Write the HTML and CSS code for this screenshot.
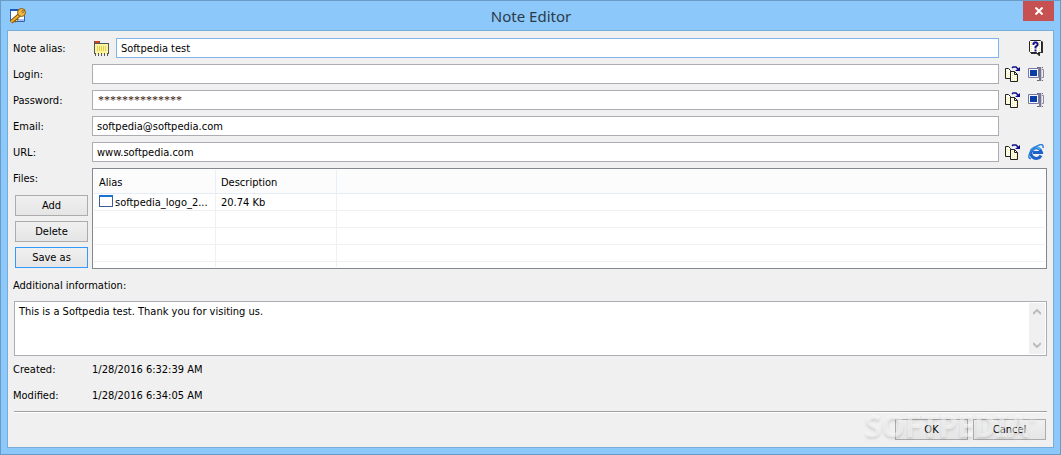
FILE: index.html
```
<!DOCTYPE html>
<html lang="en">
<head>
    <meta charset="utf-8">
    <title>Note Editor</title>
    <link rel="stylesheet" href="styles.css">
</head>
<body>
<svg class="sprites" width="0" height="0">
    <symbol id="icon-copy" viewBox="0 0 16 16">
        <path d="M1.500 2.500h3l2 2v8h-5z" fill="#fffff4" stroke="#222"/>
        <path d="M3 5v7M5 6v6" stroke="#f3e98a" stroke-dasharray="1 1"/>
        <path d="M6.500 5.500h4l3 3v7h-7z" fill="#fffff4" stroke="#222"/>
        <path d="M10.500 5.500v3h3" fill="none" stroke="#222"/>
        <path d="M8.500 7v8M10.500 10v5M12.500 10v5" stroke="#f3e98a" stroke-dasharray="1 1"/>
        <path d="M8 2l1-1h3l2 2" fill="none" stroke="#10108c" stroke-width="1.500"/>
        <path d="M16 1v4h-5z" fill="#10108c"/>
    </symbol>
    <symbol id="icon-type" viewBox="0 0 16 16">
        <path d="M.5 2.500h10v9H.5z" fill="#f8f8fc" stroke="#7777a8"/>
        <path d="M2 4h7v6H2z" fill="#0c3ea8"/>
        <path d="M9 1.500h3M13 1.500h2M9 14.500h3M13 14.500h2" stroke="#66667e"/>
        <path d="M12 1v14" stroke="#77778c" stroke-width="2"/>
        <path d="M13.500 1v14" stroke="#c9c9da"/>
        <path d="M14 3.500h1.500v8H14" fill="none" stroke="#8888a8"/>
    </symbol>
</svg>

<div class="window">
    <header class="titlebar">
        <svg class="app_icon" viewBox="0 0 18 16">
            <path d="M1.500 2.500h14v11h-14z" fill="#fff" stroke="#2f62b5"/>
            <path d="M1 1h15v2H1z" fill="#1b57ba"/>
            <path d="M8 11h7v2H8z" fill="#a9c0e6"/>
            <path d="M11 6.500L2 14" stroke="#7b5310" stroke-width="4"/>
            <path d="M5 12l2 2M7 10l2 2" stroke="#8c5d12" stroke-width="2"/>
            <path d="M11 6.500L2 14" stroke="#efb02f" stroke-width="2"/>
            <circle cx="12.500" cy="4.500" r="4" fill="#efb840" stroke="#8c5d12"/>
            <circle cx="14" cy="3.500" r="1" fill="#fff" stroke="#8c5d12"/>
        </svg>
        <h1>Note Editor</h1>
        <button class="close" aria-label="Close">
            <svg width="8" height="8" viewBox="0 0 8 8"><path d="M.5 .5l7 7M7.500 .5l-7 7" stroke="#fff" stroke-width="2"/></svg>
        </button>
    </header>

    <form class="client">
        <div class="row">
            <label for="alias">Note alias:</label>
            <svg class="note_icon" viewBox="0 0 16 16" shape-rendering="crispEdges">
                <path d="M1 1h6v2h9v11H1z" fill="#555"/>
                <path d="M2 1h4v2H2z" fill="#e63b12"/>
                <path d="M2 4h13v9H2z" fill="#fbf4a0"/>
                <path d="M4 6h1v5H4zM6 6h1v5H6zM8 6h1v5H8zM10 6h1v5h-1zM12 6h1v5h-1z" fill="#e2cf4e"/>
                <path d="M3 13h2v1H3zM6 13h2v1H6zM9 13h2v1H9zM12 13h2v1h-2z" fill="#fbf4a0"/>
                <path d="M2 14h1v2H2zM5 14h1v2H5zM8 14h1v2H8zM11 14h1v2h-1zM14 14h1v2h-1z" fill="#555"/>
            </svg>
            <input id="alias" class="focused" type="text" value="Softpedia test">
            <div class="tools">
                <button type="button" aria-label="Help">
                    <svg viewBox="0 0 16 16">
                        <path d="M3 1h11l1 1v11h-3v3h-1L9 14H3z" fill="#333"/>
                        <path d="M2.500 .5h10l1 1v10l-1 1h-2v2l-2-2h-6l-1-1v-10z" fill="#fff" stroke="#222"/>
                        <path d="M3.500 2v10M11.500 2v10" stroke="#f0e76a" stroke-dasharray="1 1"/>
                        <path d="M5.500 5V3.500l1-1h2l1 1V5L7.500 7v1.500M6.500 10.500h2" fill="none" stroke="#13138b" stroke-width="2"/>
                    </svg>
                </button>
            </div>
        </div>
        <div class="row">
            <label for="login">Login:</label>
            <input id="login" type="text">
            <div class="tools">
                <button type="button" aria-label="Copy login"><svg><use href="#icon-copy"/></svg></button>
                <button type="button" aria-label="Type login"><svg><use href="#icon-type"/></svg></button>
            </div>
        </div>
        <div class="row">
            <label for="password">Password:</label>
            <input id="password" class="masked" type="text" value="**************">
            <div class="tools">
                <button type="button" aria-label="Copy password"><svg><use href="#icon-copy"/></svg></button>
                <button type="button" aria-label="Type password"><svg><use href="#icon-type"/></svg></button>
            </div>
        </div>
        <div class="row">
            <label for="email">Email:</label>
            <input id="email" type="text" value="softpedia@softpedia.com">
            <div class="tools"></div>
        </div>
        <div class="row">
            <label for="url">URL:</label>
            <input id="url" type="text" value="www.softpedia.com">
            <div class="tools">
                <button type="button" aria-label="Copy URL"><svg><use href="#icon-copy"/></svg></button>
                <button type="button" aria-label="Open in browser">
                    <svg viewBox="0 0 16 16">
                        <path d="M13 11.500A5.300 5.300 0 1 1 13.500 8.500H5" fill="none" stroke="#1c62c8" stroke-width="3"/>
                        <path d="M12.500 5.500A5 5 0 0 0 4 6" fill="none" stroke="#4fb4f4" stroke-width="2"/>
                        <path d="M3 14.500C-1 15 1 8 6 4s10-5 9 0" fill="none" stroke="#2d7fdc" stroke-width="1.500"/>
                    </svg>
                </button>
            </div>
        </div>

        <div class="files">
            <div class="files_side">
                <span>Files:</span>
                <button class="btn" type="button">Add</button>
                <button class="btn" type="button">Delete</button>
                <button class="btn default" type="button">Save as</button>
            </div>
            <div class="list">
                <table>
                    <thead>
                        <tr><th class="col_alias">Alias</th><th class="col_desc">Description</th><th></th></tr>
                    </thead>
                    <tbody>
                        <tr>
                            <td><svg class="file_icon" viewBox="0 0 14 12" shape-rendering="crispEdges"><path d="M0 0h14v12H0z" fill="#3b5d9c"/><path d="M0 0h14v2H0z" fill="#1673cf"/><path d="M1 2h12v9H1z" fill="#fff"/></svg>softpedia_logo_2...</td>
                            <td>20.74 Kb</td>
                            <td></td>
                        </tr>
                        <tr><td></td><td></td><td></td></tr>
                        <tr><td></td><td></td><td></td></tr>
                        <tr><td></td><td></td><td></td></tr>
                        <tr class="cut"><td></td><td></td><td></td></tr>
                    </tbody>
                </table>
            </div>
        </div>

        <label class="info_label" for="info">Additional information:</label>
        <div class="memo">
            <textarea id="info">This is a Softpedia test. Thank you for visiting us.</textarea>
            <div class="scrollbar">
                <svg viewBox="0 0 8 6"><path d="M0 5l4-4 4 4" fill="none" stroke="#bcbcbc" stroke-width="2"/></svg>
                <svg viewBox="0 0 8 6"><path d="M0 1l4 4 4-4" fill="none" stroke="#bcbcbc" stroke-width="2"/></svg>
            </div>
        </div>

        <dl>
            <dt>Created:</dt><dd>1/28/2016 6:32:39 AM</dd>
            <dt>Modified:</dt><dd>1/28/2016 6:34:05 AM</dd>
        </dl>

        <footer>
            <button class="btn" type="button">OK</button>
            <button class="btn" type="button">Cancel</button>
            <div class="watermark">SOFTPEDIA<sup>®</sup></div>
        </footer>
    </form>
</div>
</body>
</html>
```
FILE: styles.css
```
* {
    box-sizing: border-box;
}

body {
    margin: 0;
    background: #8dc8fa;
    color: #000;
    font: 11px/16px "DejaVu Sans Condensed", Tahoma, sans-serif;
}

button, input, textarea {
    font: inherit;
    color: inherit;
    margin: 0;
}

svg {
    display: block;
}

.sprites {
    position: absolute;
}

.window {
    min-height: 100vh;
    display: flex;
    flex-direction: column;
    padding: 0 6px 6px;
    border: 1px solid #6b9ac5;
    background: #8dc8fa;
}

/* title bar */
.titlebar {
    display: flex;
    align-items: center;
    height: 29px;
    padding-left: 2px;
}

.app_icon {
    width: 18px;
    height: 16px;
}

.titlebar h1 {
    flex: 1;
    margin: 0;
    padding-left: 12px;
    text-align: center;
    font: 15px/26px "Noto Sans", "Segoe UI", sans-serif;
    color: #2b3b49;
}

.close {
    display: flex;
    align-items: center;
    justify-content: center;
    align-self: flex-start;
    width: 31px;
    height: 20px;
    padding: 0;
    border: 0;
    background: #c75050;
}

/* form */
.client {
    flex: 1;
    padding: 7px 6px 6px 5px;
    border: 1px solid #78add9;
    background: #f0f0f0;
}

.row {
    display: flex;
    align-items: center;
    height: 20px;
    margin-bottom: 6px;
}

.row > label {
    width: 79px;
    padding-top: 2px;
}

.row input {
    flex: 1;
    min-width: 0;
    height: 20px;
    padding: 0 4px;
    border: 1px solid #abadb3;
    background: #fff;
    outline: 0;
}

.row .focused {
    border-color: #7eb4ea;
}

.row .masked {
    padding-left: 5px;
    font: 12px/16px "Liberation Serif", serif;
    color: #3a2010;
}

.note_icon {
    width: 16px;
    height: 16px;
    margin: 0 7px 0 1px;
}

.tools {
    display: flex;
    justify-content: flex-end;
    gap: 8px;
    width: 48px;
    padding-right: 3px;
}

.tools button {
    padding: 0;
    border: 0;
    background: none;
}

.tools svg {
    width: 16px;
    height: 16px;
}

.btn {
    width: 73px;
    height: 21px;
    padding: 0;
    border: 1px solid #acacac;
    background: linear-gradient(#f0f0f0, #e5e5e5);
}

.btn.default {
    border-color: #3399ff;
}

/* attached files */
.files {
    display: flex;
}

.files_side {
    display: flex;
    flex-direction: column;
    gap: 5px;
    width: 79px;
}

.files_side span {
    height: 22px;
    line-height: 22px;
}

.files_side .btn {
    margin-left: 2px;
}

.list {
    flex: 1;
    padding: 1px;
    border: 1px solid #828790;
    background: #fff;
}

table {
    width: 100%;
    table-layout: fixed;
    border-collapse: separate;
    border-spacing: 0;
}

th {
    height: 24px;
    padding: 2px 5px 0;
    border-right: 1px solid #e5f0fa;
    border-bottom: 1px solid #e5ecf5;
    background: #fcfcfc;
    text-align: left;
    font-weight: normal;
}

td {
    height: 17px;
    padding: 1px 5px 0;
    border-right: 1px solid #f0f0f0;
    border-bottom: 1px solid #f0f0f0;
    line-height: 15px;
    white-space: nowrap;
}

th:last-child, td:last-child {
    border-right: 0;
}

.col_alias {
    width: 122px;
}

.col_desc {
    width: 121px;
}

.cut td {
    height: 5px;
    border-bottom: 0;
}

.file_icon {
    display: inline-block;
    width: 14px;
    height: 12px;
    margin-right: 2px;
    vertical-align: -1px;
}

/* additional information */
.info_label {
    display: block;
    margin: 9px 0 7px;
}

.memo {
    display: flex;
    height: 55px;
    margin-left: 1px;
    padding: 1px;
    border: 1px solid #abadb3;
    background: #fff;
}

.memo textarea {
    flex: 1;
    padding: 1px 3px 0;
    border: 0;
    outline: 0;
    resize: none;
    overflow: hidden;
    background: #fff;
}

.scrollbar {
    display: flex;
    flex-direction: column;
    justify-content: space-between;
    align-items: center;
    width: 16px;
    padding: 6px 0;
    background: #f0f0f0;
}

.scrollbar svg {
    width: 8px;
    height: 6px;
}

dl {
    display: grid;
    grid-template-columns: 79px 1fr;
    row-gap: 10px;
    margin: 6px 0 7px;
}

dd {
    margin: 0;
}

footer {
    position: relative;
    display: flex;
    justify-content: flex-end;
    gap: 5px;
    margin-left: 1px;
    padding: 7px 1px 0 0;
    border-top: 1px solid #a0a0a0;
    box-shadow: inset 0 1px #fff;
}

/* stamp laid over the buttons */
.watermark {
    position: absolute;
    right: 11px;
    top: -6px;
    font: bold 30px/40px "Noto Sans", sans-serif;
    color: rgba(255, 255, 255, 0.5);
    text-shadow: 0 2px 3px rgba(0, 0, 0, 0.12);
    pointer-events: none;
}

.watermark sup {
    font-size: 9px;
    line-height: 9px;
    vertical-align: 14px;
}
```
